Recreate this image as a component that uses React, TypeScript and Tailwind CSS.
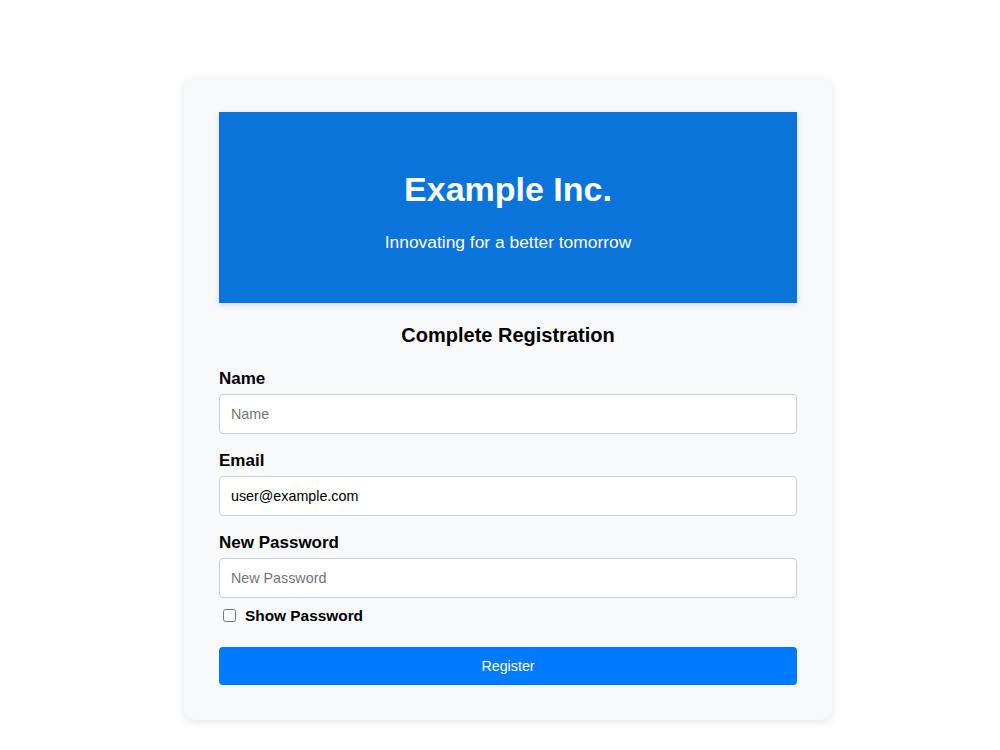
import { useState } from 'react'

export default function App() {
  const [show, setShow] = useState(false)

  return (
    <div className="min-h-screen bg-white pl-4 pt-[78px] font-['Liberation_Sans',Arial,sans-serif]">
      <div className="mx-auto w-[648px] rounded-[10px] bg-[#f8f9fa] px-[35px] pt-[34px] pb-[35px] shadow-[0_2px_10px_rgba(0,0,0,0.1)]">
        <header className="flex h-[191px] flex-col items-center bg-[#0a74da] pt-[58px] text-white shadow-[0_2px_5px_rgba(0,0,0,0.15)]">
          <h1 className="text-[34px] font-bold leading-[39px]">Example Inc.</h1>
          <p className="mt-[23px] text-[17.4px] leading-[20px]">Innovating for a better tomorrow</p>
        </header>

        <h2 className="mt-[20px] mb-[20px] text-center text-[20px] font-bold leading-[25px] text-black">
          Complete Registration
        </h2>

        <form onSubmit={(e) => e.preventDefault()}>
          <label className="block text-[17px] font-bold leading-[21px] text-black">Name</label>
          <input
            type="text"
            placeholder="Name"
            className="mt-[5px] block h-[40px] w-full rounded-[4px] border border-[#ccc] bg-white px-[11px] text-[14.3px] text-black placeholder:text-[#757575] outline-none"
          />

          <label className="mt-[16px] block text-[17px] font-bold leading-[21px] text-black">Email</label>
          <input
            type="email"
            defaultValue="user@example.com"
            className="mt-[5px] block h-[40px] w-full rounded-[4px] border border-[#ccc] bg-white px-[11px] text-[14.3px] text-black outline-none"
          />

          <label className="mt-[16px] block text-[17px] font-bold leading-[21px] text-black">New Password</label>
          <input
            type={show ? 'text' : 'password'}
            placeholder="New Password"
            className="mt-[5px] block h-[40px] w-full rounded-[4px] border border-[#ccc] bg-white px-[11px] text-[14.3px] text-black placeholder:text-[#757575] outline-none"
          />

          <label className="mt-[8px] flex h-[20px] items-center text-[15.4px] font-bold text-black">
            <input
              type="checkbox"
              checked={show}
              onChange={() => setShow(!show)}
              className="mb-[2px] ml-[4px] mr-[9px] h-[13px] w-[13px]"
            />
            Show Password
          </label>

          <button
            type="submit"
            className="mt-[21px] block h-[38px] w-full rounded-[4px] bg-[#007bff] pt-[2px] text-[14.3px] text-white"
          >
            Register
          </button>
        </form>
      </div>
    </div>
  )
}
